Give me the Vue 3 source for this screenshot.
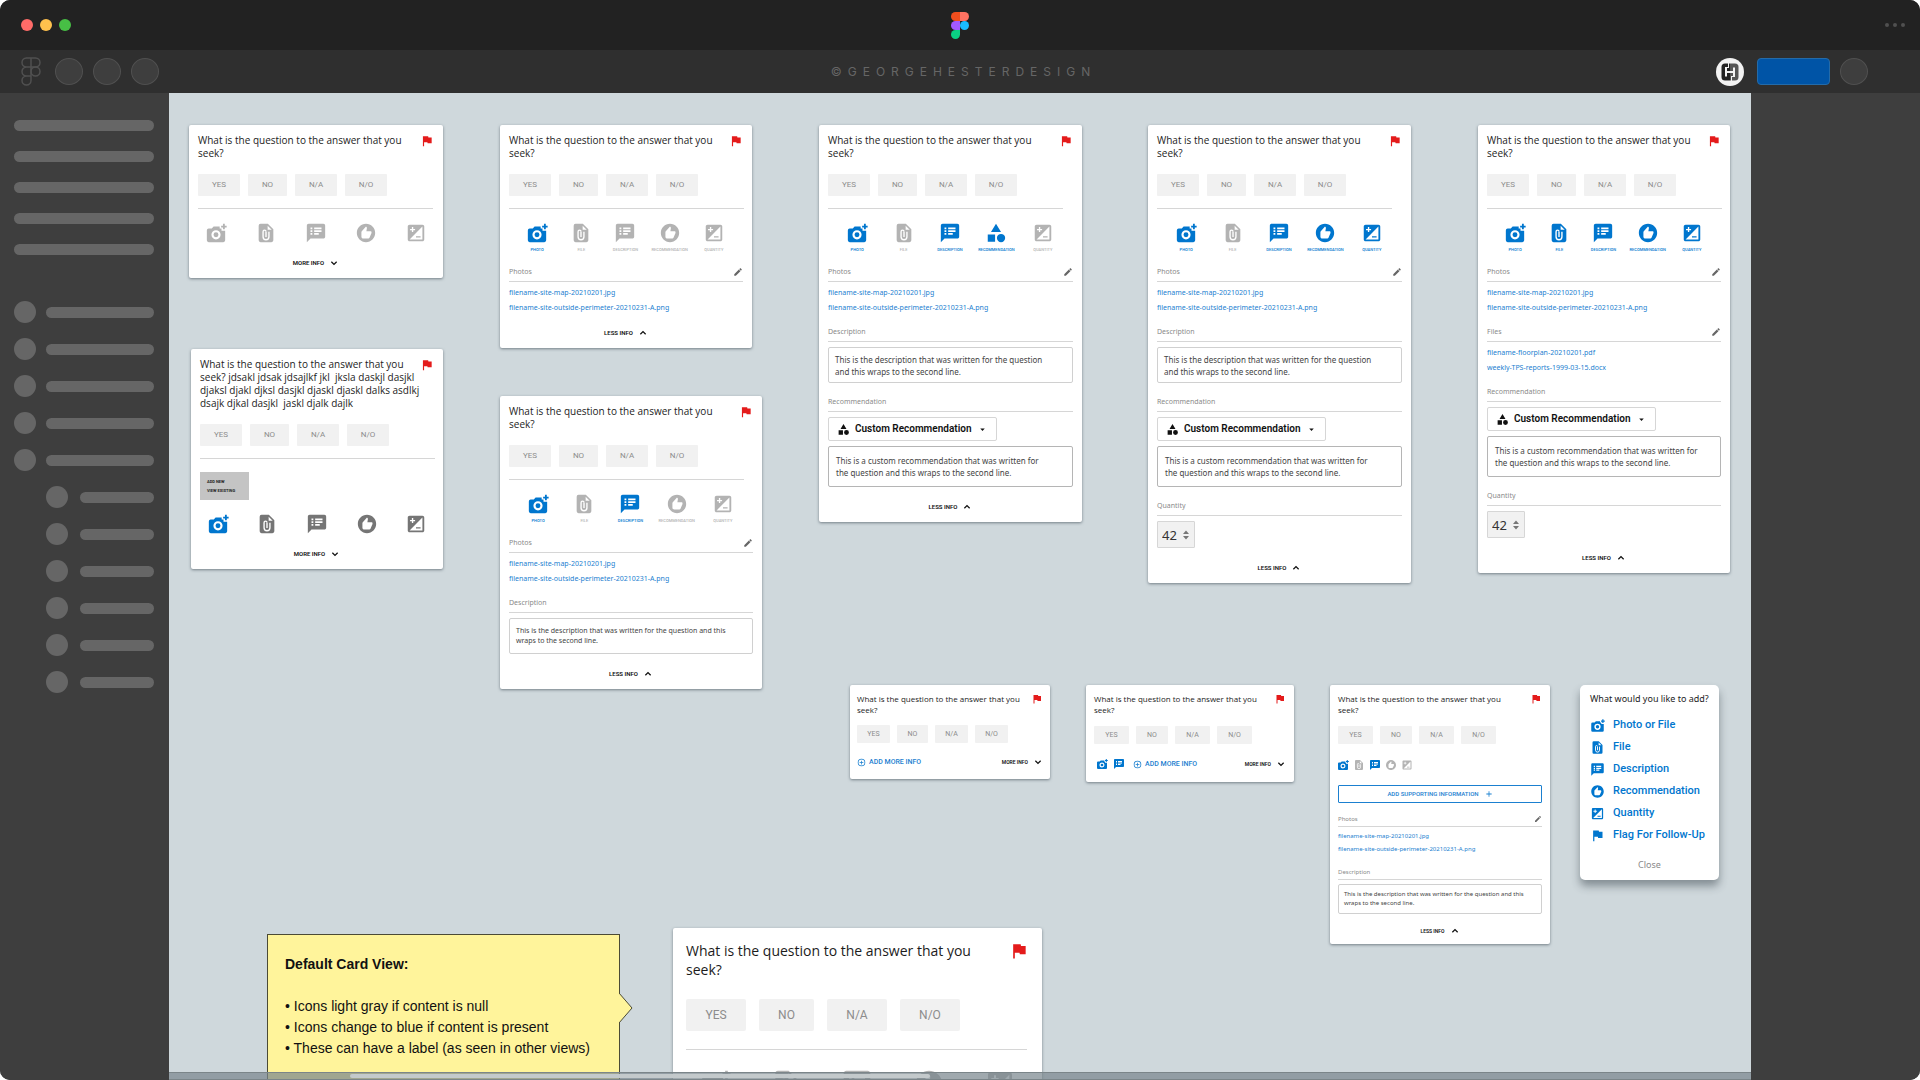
<script setup>
import { h } from 'vue'

const glyphs = {
  photo: 'M9.4 5 7.4 7.2H4a2 2 0 0 0-2 2V20a2 2 0 0 0 2 2h16a2 2 0 0 0 2-2V9.6h-4V7.2h-2V5zM12 9a5 5 0 1 0 0 10 5 5 0 0 0 0-10zm0 2.3a2.7 2.7 0 1 1 0 5.4 2.7 2.7 0 0 1 0-5.4zM19.6 2h2v2h2v2h-2v2h-2V6h-2V4h2z',
  file: 'M6 2a2 2 0 0 0-2 2v16a2 2 0 0 0 2 2h12a2 2 0 0 0 2-2V8l-6-6zm7.8 2 4.4 4.4h-4.4z',
  description: 'M20 2H4c-1.1 0-2 .9-2 2v18l4-4h14c1.1 0 2-.9 2-2V4c0-1.1-.9-2-2-2zM8 14H6v-2h2v2zm0-3H6V9h2v2zm0-3H6V6h2v2zm7 6h-5v-2h5v2zm3-3h-8V9h8v2zm0-3h-8V6h8v2z',
  recommendation: 'M12 2C6.48 2 2 6.48 2 12s4.48 10 10 10 10-4.48 10-10S17.52 2 12 2zM18 11.8c0 .17-.03.34-.1.49l-2.1 4.9c-.22.51-.74.83-1.3.8H9c-1.1 0-2-.9-2-2v-5c-.01-.38.13-.74.4-1L12 5l.69.69c.18.19.29.44.3.7v.2L12.41 10H17c.55 0 1 .45 1 1z',
  quantity: 'M19 3H5c-1.1 0-2 .9-2 2v14c0 1.1.9 2 2 2h14c1.1 0 2-.9 2-2V5c0-1.1-.9-2-2-2zM5.5 7.5h2v-2H9v2h2V9H9v2H7.5V9h-2V7.5zM19 19H5L19 5v14zm-2-2v-1.5h-5V17h5z',
  category: 'M12 2l-5.5 9h11zM17.5 13a4.5 4.5 0 1 0 0 9 4.5 4.5 0 0 0 0-9zM3 13.5h8v8H3z',
  flag: 'M14.4 6L14 4H5v17h2v-7h5.6l.4 2h7V6z',
  edit: 'M3 17.25V21h3.75L17.81 9.94l-3.75-3.75L3 17.25zM20.71 7.04c.39-.39.39-1.02 0-1.41l-2.34-2.34c-.39-.39-1.02-.39-1.41 0l-1.83 1.83 3.75 3.75 1.83-1.83z',
  down: 'M6.7 7.9 12 13.2l5.3-5.3L19.4 10 12 17.4 4.6 10z',
  up: 'M6.7 16.1 12 10.8l5.3 5.3 2.1-2.1L12 6.6 4.6 14z',
  caret: 'M6 9h12l-6 7z',
  plus: 'M10.8 4h2.4v6.8H20v2.4h-6.8V20h-2.4v-6.8H4v-2.4h6.8z',
  addCircle: 'M12 2a10 10 0 1 0 0 20 10 10 0 0 0 0-20zm0 2a8 8 0 1 1 0 16 8 8 0 0 1 0-16zM11 7h2v4h4v2h-4v4h-2v-4H7v-2h4z',
  spin: 'M12 3l6 7H6zM6 14h12l-6 7z'
}

const Icon = ({ name }) =>
  h('svg', { class: 'icon', viewBox: '0 0 24 24', 'aria-hidden': 'true' }, [
    h('path', { d: glyphs[name], fill: 'currentColor', 'fill-rule': 'evenodd' }),
    name === 'file'
      ? h('path', {
          d: 'M12 11v5.4M15.2 10.5v5.7a3.2 3.2 0 0 1-6.4 0v-5.7a1.6 1.6 0 0 1 3.2 0',
          fill: 'none',
          stroke: '#fff',
          'stroke-width': 1.5
        })
      : null
  ])
Icon.props = ['name']

const answers = ['YES', 'NO', 'N/A', 'N/O']
const kinds = [
  { id: 'photo', label: 'PHOTO' },
  { id: 'file', label: 'FILE' },
  { id: 'description', label: 'DESCRIPTION' },
  { id: 'recommendation', label: 'RECOMMENDATION' },
  { id: 'quantity', label: 'QUANTITY' }
]

const question = 'What is the question to the answer that you\nseek?'
const photos = {
  type: 'links',
  title: 'Photos',
  links: ['filename-site-map-20210201.jpg', 'filename-site-outside-perimeter-20210231-A.png']
}
const files = {
  type: 'links',
  title: 'Files',
  links: ['filename-floorplan-20210201.pdf', 'weekly-TPS-reports-1999-03-15.docx']
}
const description = {
  type: 'text',
  title: 'Description',
  text: 'This is the description that was written for the question\nand this wraps to the second line.'
}
const compactDescription = {
  type: 'text',
  title: 'Description',
  compact: true,
  text: 'This is the description that was written for the question and this\nwraps to the second line.'
}
const recommendation = {
  type: 'recommendation',
  title: 'Recommendation',
  text: 'This is a custom recommendation that was written for\nthe question and this wraps to the second line.'
}
const quantity = { type: 'quantity', title: 'Quantity' }

const cards = [
  { id: 'default', x: 20, y: 32, w: 254, question, rule: true, row: 'plain', active: [], sections: [], foot: 'more' },
  {
    id: 'long', x: 22, y: 256, w: 252, rule: true, menu: true, row: 'dark', active: ['photo'], sections: [], foot: 'more',
    question: 'What is the question to the answer that you\nseek? jdsakl jdsak jdsajlkf jkl  jksla daskjl dasjkl\ndjaksl djakl djksl dasjkl djaskl djaskl dalks asdlkj\ndsajk djkal dasjkl  jaskl djalk dajlk'
  },
  { id: 'photos', x: 331, y: 32, w: 252, question, rule: true, row: 'labels', active: ['photo'], sections: [photos], foot: 'less' },
  { id: 'described', x: 331, y: 303, w: 262, question, rule: true, row: 'labels', active: ['photo', 'description'], sections: [photos, compactDescription], foot: 'less' },
  { id: 'recommended', x: 650, y: 32, w: 263, question, rule: true, row: 'labels', active: ['photo', 'description', 'recommendation'], category: true, sections: [photos, description, recommendation], foot: 'less' },
  { id: 'counted', x: 979, y: 32, w: 263, question, rule: true, row: 'labels', active: ['photo', 'description', 'recommendation', 'quantity'], sections: [photos, description, recommendation, quantity], foot: 'less' },
  { id: 'full', x: 1309, y: 32, w: 252, question, rule: true, row: 'labels', active: ['photo', 'file', 'description', 'recommendation', 'quantity'], sections: [photos, files, recommendation, quantity], foot: 'less' },
  { id: 'mini', x: 681, y: 592, w: 200, size: 'small tight', question, active: [], sections: [], foot: 'add' },
  { id: 'mini-filled', x: 917, y: 592, w: 208, size: 'small', question, active: ['photo', 'description'], sections: [], foot: 'add' },
  { id: 'mini-open', x: 1161, y: 592, w: 220, size: 'small', question, row: 'plain', support: true, active: ['photo', 'description'], sections: [photos, compactDescription], foot: 'less' },
  { id: 'enlarged', x: 504, y: 835, w: 369, size: 'large', question, rule: true, row: 'plain', active: [], sections: [] }
]

const additions = [
  ['photo', 'Photo or File'],
  ['file', 'File'],
  ['description', 'Description'],
  ['recommendation', 'Recommendation'],
  ['quantity', 'Quantity'],
  ['flag', 'Flag For Follow-Up']
]

const iconFor = (card, id) => (card.category && id === 'recommendation' ? 'category' : id)
</script>

<template>
  <div class="window">
    <header class="titlebar">
      <div class="lights"><i class="red"></i><i class="amber"></i><i class="green"></i></div>
      <svg class="logo" viewBox="0 0 18 27" aria-hidden="true">
        <path fill="#f24e1e" d="M4.500 0H9v9H4.500a4.500 4.500 0 0 1 0-9z" />
        <path fill="#ff7262" d="M9 0h4.500a4.500 4.500 0 0 1 0 9H9z" />
        <path fill="#a259ff" d="M4.500 9H9v9H4.500a4.500 4.500 0 0 1 0-9z" />
        <circle fill="#1abcfe" cx="13.500" cy="13.500" r="4.500" />
        <path fill="#0acf83" d="M4.500 18H9v4.500A4.500 4.500 0 1 1 4.500 18z" />
      </svg>
      <div class="dots"><i></i><i></i><i></i></div>
    </header>

    <div class="toolbar">
      <div class="tools">
        <svg class="outline" viewBox="0 0 20 29" fill="none" stroke="#505050" stroke-width="1.500" aria-hidden="true">
          <path d="M10 1H5.500a4.500 4.500 0 0 0 0 9H10zM10 1h4.500a4.500 4.500 0 0 1 0 9H10zM10 10H5.500a4.500 4.500 0 0 0 0 9H10zM10 19H5.500a4.500 4.500 0 1 0 4.500 4.500z" />
          <circle cx="14.500" cy="14.500" r="4.500" />
        </svg>
        <i class="round"></i><i class="round"></i><i class="round"></i>
      </div>
      <div class="credit">©GEORGEHESTERDESIGN</div>
      <div class="account">
        <svg class="avatar" viewBox="0 0 28 28" aria-hidden="true">
          <circle cx="14" cy="14" r="14" fill="#f2f2f2" />
          <path d="M14 5.500H9A3.500 3.500 0 0 0 5.500 9v10A3.500 3.500 0 0 0 9 22.500h5z" fill="#222" />
          <path d="M14 5.500h5A3.500 3.500 0 0 1 22.500 9v10a3.500 3.500 0 0 1-3.500 3.500h-5z" fill="#555" />
          <path d="M10 9.500v9M18 9.500v9" stroke="#f2f2f2" stroke-width="2" />
          <path d="M10 14h8" stroke="#f2f2f2" stroke-width="2" />
          <path d="M12.500 5v4.500M15.500 18.500V23M9 9.500h4M15 18.500h4" stroke="#f2f2f2" stroke-width="1" />
        </svg>
        <button class="share" type="button" aria-label="Share"></button>
        <i class="round"></i>
      </div>
    </div>

    <div class="workspace">
      <aside class="side">
        <div class="bars"><i v-for="n in 5" :key="n" class="bar"></i></div>
        <div class="tree">
          <div v-for="n in 11" :key="n" class="node" :class="{ nested: n > 5 }"><i class="knob"></i><i class="bar"></i></div>
        </div>
      </aside>

      <main class="canvas">
        <article
          v-for="card in cards"
          :key="card.id"
          class="card"
          :class="card.size"
          :style="{ left: card.x + 'px', top: card.y + 'px', width: card.w + 'px' }"
        >
          <div class="head">
            <h2>{{ card.question }}</h2>
            <Icon name="flag" class="flag" />
          </div>
          <div class="answers">
            <button v-for="a in answers" :key="a" type="button" :class="{ narrow: a === 'NO' }">{{ a }}</button>
          </div>
          <hr v-if="card.rule" />
          <div v-if="card.menu" class="menu">
            <button type="button">ADD NEW</button>
            <button type="button">VIEW EXISTING</button>
          </div>
          <div v-if="card.row" class="kinds" :class="card.row">
            <button
              v-for="k in kinds"
              :key="k.id"
              type="button"
              :aria-label="k.label"
              :class="{ on: card.active.includes(k.id) }"
            >
              <Icon :name="iconFor(card, k.id)" />
              <span v-if="card.row === 'labels'">{{ k.label }}</span>
            </button>
          </div>
          <button v-if="card.support" class="support" type="button">ADD SUPPORTING INFORMATION <Icon name="plus" /></button>

          <section v-for="s in card.sections" :key="s.title">
            <h3>
              <label :for="s.type === 'links' ? null : card.id + s.title">{{ s.title }}</label>
              <Icon v-if="s.type === 'links'" name="edit" />
            </h3>
            <ul v-if="s.type === 'links'">
              <li v-for="l in s.links" :key="l"><a href="#">{{ l }}</a></li>
            </ul>
            <textarea v-else-if="s.type === 'text'" :id="card.id + s.title" :class="{ compact: s.compact }" rows="2" :value="s.text"></textarea>
            <template v-else-if="s.type === 'recommendation'">
              <div class="picker">
                <Icon name="category" />
                <select :id="card.id + s.title"><option>Custom Recommendation</option></select>
                <Icon name="caret" class="caret" />
              </div>
              <textarea class="custom" aria-label="Custom recommendation" rows="2" :value="s.text"></textarea>
            </template>
            <div v-else class="stepper">
              <input :id="card.id + s.title" type="number" value="42" />
              <Icon name="spin" />
            </div>
          </section>

          <div v-if="card.foot === 'add'" class="foot split">
            <span v-if="card.active.length" class="chips"><Icon v-for="id in card.active" :key="id" :name="id" /></span>
            <button class="add" type="button"><Icon name="addCircle" />ADD MORE INFO</button>
            <button class="toggle" type="button">MORE INFO<Icon name="down" /></button>
          </div>
          <div v-else-if="card.foot" class="foot">
            <button class="toggle" type="button">
              {{ card.foot === 'more' ? 'MORE INFO' : 'LESS INFO' }}<Icon :name="card.foot === 'more' ? 'down' : 'up'" />
            </button>
          </div>
        </article>

        <div class="popup">
          <h2>What would you like to add?</h2>
          <button v-for="[icon, text] in additions" :key="text" type="button"><Icon :name="icon" />{{ text }}</button>
          <button class="close" type="button">Close</button>
        </div>

        <div class="note">
          <strong>Default Card View:</strong>
          <p>• Icons light gray if content is null</p>
          <p>• Icons change to blue if content is present</p>
          <p>• These can have a label (as seen in other views)</p>
          <svg class="pointer" viewBox="0 0 14 30" aria-hidden="true">
            <path d="M0 0 13 15 0 30" fill="#fff49b" stroke="#4b4a35" stroke-width="1" />
          </svg>
        </div>

        <div class="scroll"><i></i></div>
      </main>

      <aside class="side right"></aside>
    </div>
  </div>
</template>

<style>
body {
  background: #fff;
}
</style>

<style scoped>
.window,
.window * {
  box-sizing: border-box;
}
.window {
  height: 100vh;
  display: flex;
  flex-direction: column;
  overflow: hidden;
  border-radius: 10px;
  background: #3e3e3e;
  font-family: "Noto Sans", "Open Sans", sans-serif;
}
button,
input,
select,
textarea {
  margin: 0;
  padding: 0;
  border: 0;
  background: none;
  font: inherit;
  color: inherit;
}
h2,
h3,
p,
ul {
  margin: 0;
  padding: 0;
  list-style: none;
  font-weight: 400;
}
i {
  display: block;
}
.icon {
  display: block;
  flex: none;
}

.titlebar,
.toolbar {
  flex: none;
  display: grid;
  grid-template-columns: 1fr auto 1fr;
  align-items: center;
}
.titlebar {
  height: 50px;
  padding: 0 15px;
  background: #222;
}
.lights,
.dots,
.tools,
.account {
  display: flex;
  align-items: center;
}
.lights {
  gap: 7px;
  padding-left: 6px;
}
.lights i {
  width: 12px;
  height: 12px;
  border-radius: 50%;
}
.red {
  background: #ff6b68;
}
.amber {
  background: #ffc14d;
}
.green {
  background: #47bf45;
}
.logo {
  width: 18px;
  height: 27px;
}
.dots {
  justify-self: end;
  gap: 4px;
}
.dots i {
  width: 4px;
  height: 4px;
  border-radius: 50%;
  background: #505050;
}
.toolbar {
  height: 43px;
  padding: 0 52px 0 21px;
  background: #2f2f2f;
}
.tools,
.account {
  gap: 10px;
}
.outline {
  width: 20px;
  height: 29px;
  margin-right: 4px;
}
.round {
  width: 28px;
  height: 27px;
  border: 1px solid #505050;
  border-radius: 50%;
  background: #3e3e3e;
}
.credit {
  padding-left: 38px;
  color: #666;
  font: 12px/16px "Inter", sans-serif;
  letter-spacing: 6px;
}
.account {
  justify-self: end;
}
.avatar {
  width: 28px;
  height: 28px;
  margin-right: 3px;
}
.share {
  width: 73px;
  height: 27px;
  border: 1px solid #246ba9;
  border-radius: 4px;
  background: #0054a6;
}

.workspace {
  flex: 1;
  min-height: 0;
  display: grid;
  grid-template-columns: 169px minmax(0, 1fr) 169px;
}
.side {
  padding: 27px 15px 0 14px;
  background: #3e3e3e;
}
.bars {
  display: grid;
  gap: 20px;
}
.bar {
  height: 11px;
  border-radius: 6px;
  background: #666;
}
.tree {
  display: grid;
  gap: 15px;
  margin-top: 46px;
}
.node {
  display: flex;
  align-items: center;
  gap: 10px;
}
.node.nested {
  gap: 12px;
  padding-left: 32px;
}
.node .bar {
  flex: 1;
}
.knob {
  width: 22px;
  height: 22px;
  border-radius: 50%;
  background: #666;
}
.canvas {
  position: relative;
  overflow: hidden;
  background: #cfd8dc;
}

.card {
  position: absolute;
  padding: 9px 9px 11px;
  border-radius: 2px;
  background: #fff;
  box-shadow: 0 1px 3px rgba(40, 55, 65, 0.55);
}
.head {
  display: flex;
  justify-content: space-between;
  color: #1c1c1c;
}
.head h2 {
  font-family: "Open Sans", "Noto Sans", sans-serif;
  font-size: 10px;
  line-height: 13px;
  white-space: pre;
}
.head .flag {
  width: 14px;
  height: 14px;
  color: #e41b1b;
}
.answers {
  display: flex;
  gap: 8px;
  margin-top: 14px;
}
.answers button {
  width: 42px;
  height: 22px;
  border-radius: 1px;
  background: #f1f1f1;
  color: #8c8c8c;
  font: 400 8px/22px "Roboto", sans-serif;
}
.answers .narrow {
  width: 39px;
}
hr {
  width: 235px;
  height: 1px;
  margin: 12px 0 0;
  border: 0;
  background: #d6d6d6;
}
.menu {
  display: grid;
  justify-items: start;
  width: 49px;
  margin-top: 13px;
  padding: 5px 7px;
  background: #c4c4c4;
  color: #222;
  font: 700 4px/9px "Roboto", sans-serif;
}
.kinds {
  display: grid;
  grid-template-columns: repeat(5, minmax(0, 1fr));
  margin: 13px -7px 0;
  color: #b3b3b3;
}
.kinds.dark {
  color: #757575;
}
.kinds.labels {
  margin: 13px 7px 0 6px;
}
.kinds button {
  display: flex;
  flex-direction: column;
  align-items: center;
  gap: 3px;
}
.kinds .icon {
  width: 22px;
  height: 22px;
}
.kinds span {
  font: 500 4px/6px "Roboto", sans-serif;
}
.kinds .on {
  color: #0076ce;
}
.kinds.labels + section {
  margin-top: 14px;
}
section {
  display: flow-root;
  margin-top: 11px;
}
h3 {
  display: flex;
  justify-content: space-between;
  height: 15px;
  border-bottom: 1px solid #d6d6d6;
  color: #8a8a8a;
  font-size: 7px;
  line-height: 10px;
}
h3 .icon {
  width: 10px;
  height: 10px;
  color: #666;
}
ul {
  margin-top: 3px;
}
li {
  height: 15px;
  line-height: 15px;
  font-size: 7px;
}
ul:last-child {
  margin-bottom: 1px;
}
a {
  display: block;
  color: #1b80d0;
  text-decoration: none;
}
textarea {
  display: block;
  width: 100%;
  margin: 5px 0 3px;
  padding: 6px 0 4px 6px;
  border: 1px solid #d0d0d0;
  border-radius: 2px;
  color: #444;
  font-size: 8px;
  line-height: 12px;
  white-space: pre;
  overflow: hidden;
  resize: none;
}
textarea.compact {
  padding: 7px 0 7px 6px;
  font-size: 7px;
  line-height: 10px;
}
textarea.custom {
  padding: 8px 0 7px 7px;
  border-color: #b5b5b5;
}
.picker {
  display: flex;
  align-items: center;
  width: 169px;
  height: 24px;
  margin-top: 5px;
  padding: 0 8px;
  border: 1px solid #d6d6d6;
  border-radius: 2px;
  color: #111;
}
.picker .icon {
  width: 13px;
  height: 13px;
}
.picker select {
  flex: 1;
  margin-left: 5px;
  appearance: none;
  font: 600 10px/20px "Roboto", sans-serif;
}
.picker .caret {
  width: 9px;
  height: 9px;
  margin-right: 1px;
}
.stepper {
  display: flex;
  align-items: center;
  width: 38px;
  height: 27px;
  margin: 5px 0 3px;
  padding: 0 2px 0 4px;
  border: 1px solid #d6d6d6;
  border-radius: 1px;
  background: #f1f1f1;
  color: #333;
}
.stepper input {
  flex: 1;
  min-width: 0;
  font-size: 13px;
  line-height: 18px;
  appearance: textfield;
}
.stepper input::-webkit-inner-spin-button {
  display: none;
}
.stepper .icon {
  width: 12px;
  height: 12px;
  color: #777;
}
.foot {
  display: flex;
  justify-content: center;
  margin-top: 15px;
}
section + .foot {
  margin-top: 13px;
}
.toggle {
  display: flex;
  align-items: center;
  gap: 5px;
  height: 8px;
  color: #111;
  font: 600 6px/8px "Roboto", sans-serif;
}
.toggle .icon {
  width: 10px;
  height: 10px;
}

.small {
  padding: 8px 8px 9px;
}
.small .head h2 {
  font-size: 8px;
  line-height: 11px;
}
.small .flag {
  width: 12px;
  height: 12px;
}
.small .answers {
  gap: 7px;
  margin-top: 11px;
}
.small .answers button {
  width: 35px;
  height: 18px;
  font-size: 7px;
  line-height: 18px;
}
.small .answers .narrow {
  width: 32px;
}
.small.tight {
  padding: 8px 7px;
}
.small.tight .answers {
  margin-top: 10px;
}
.small.tight .answers button {
  width: 33px;
}
.small.tight .answers .narrow {
  width: 31px;
}
.small .kinds {
  grid-template-columns: repeat(5, 16px);
  margin: 15px 0 0 -3px;
}
.small .kinds .icon {
  width: 12px;
  height: 12px;
}
.support {
  display: flex;
  align-items: center;
  justify-content: center;
  gap: 6px;
  width: 100%;
  height: 18px;
  margin: 14px 0 12px;
  border: 1px solid #1b80d0;
  border-radius: 1px;
  color: #1b80d0;
  font: 500 6px/16px "Roboto", sans-serif;
}
.support .icon {
  width: 8px;
  height: 8px;
}
.support + section {
  margin-top: 12px;
}
.small h3 {
  height: 12px;
  font-size: 6px;
  line-height: 8px;
}
.small h3 .icon {
  width: 8px;
  height: 8px;
}
.small ul {
  margin-top: 3px;
}
.small li {
  height: 13px;
  font-size: 6px;
  line-height: 13px;
}
.small textarea {
  margin: 4px 0 0;
  padding: 5px 0 5px 5px;
  font-size: 6px;
  line-height: 9px;
}
.small .toggle {
  font-size: 5px;
}
.small .foot.split {
  align-items: center;
  justify-content: flex-start;
  gap: 8px;
  margin: 14px 0 3px;
}
.small.tight .foot.split {
  margin-top: 13px;
}
.split .toggle {
  margin-left: auto;
}
.chips {
  display: flex;
  gap: 5px;
  padding-left: 2px;
  color: #0076ce;
}
.chips .icon {
  width: 12px;
  height: 12px;
}
.add {
  display: flex;
  align-items: center;
  gap: 3px;
  height: 12px;
  color: #1b80d0;
  font: 500 7px/12px "Roboto", sans-serif;
}
.add .icon {
  width: 9px;
  height: 9px;
}

.large {
  padding: 13px 13px 14px;
}
.large .head h2 {
  font-size: 14px;
  line-height: 19px;
}
.large .flag {
  width: 20px;
  height: 20px;
}
.large .answers {
  gap: 13px;
  margin-top: 20px;
}
.large .answers button {
  width: 60px;
  height: 32px;
  border-radius: 2px;
  font-size: 12px;
  line-height: 32px;
}
.large .answers .narrow {
  width: 55px;
}
.large hr {
  width: 341px;
  margin-top: 18px;
}
.large .kinds {
  margin-top: 18px;
}
.large .kinds .icon {
  width: 32px;
  height: 32px;
}

.popup {
  position: absolute;
  left: 1411px;
  top: 592px;
  width: 139px;
  display: flex;
  flex-direction: column;
  padding: 7px 10px 8px;
  border-radius: 5px;
  background: #fff;
  box-shadow: 0 6px 8px rgba(40, 50, 60, 0.45);
  color: #1c1c1c;
}
.popup h2 {
  margin-bottom: 8px;
  font-size: 9px;
  line-height: 14px;
  white-space: nowrap;
}
.popup button {
  display: flex;
  align-items: center;
  gap: 8px;
  height: 22px;
  color: #0076ce;
  font: 500 11px/22px "Roboto", sans-serif;
  white-space: nowrap;
}
.popup button .icon {
  width: 15px;
  height: 15px;
}
.popup .close {
  justify-content: center;
  height: 14px;
  margin-top: 12px;
  color: #8a8a8a;
  font: 9px/14px "Noto Sans", sans-serif;
}

.note {
  position: absolute;
  left: 98px;
  top: 841px;
  width: 353px;
  height: 200px;
  padding: 19px 17px;
  border: 1px solid #4b4a35;
  background: #fff49b;
  color: #111;
  font: 14px/21px "Liberation Sans", sans-serif;
}
.note strong {
  display: block;
  margin-bottom: 21px;
}
.pointer {
  position: absolute;
  left: 351px;
  top: 58px;
  width: 14px;
  height: 30px;
}
.scroll {
  position: absolute;
  left: 0;
  right: 0;
  bottom: 0;
  height: 8px;
  padding: 1px 0;
  border-top: 1px solid #7b8589;
  border-bottom: 1px solid #7b8589;
  background: rgba(120, 133, 140, 0.7);
}
.scroll i {
  width: 580px;
  height: 4px;
  margin-left: 181px;
  border-radius: 2px;
  background: #c3c9cb;
}
</style>
